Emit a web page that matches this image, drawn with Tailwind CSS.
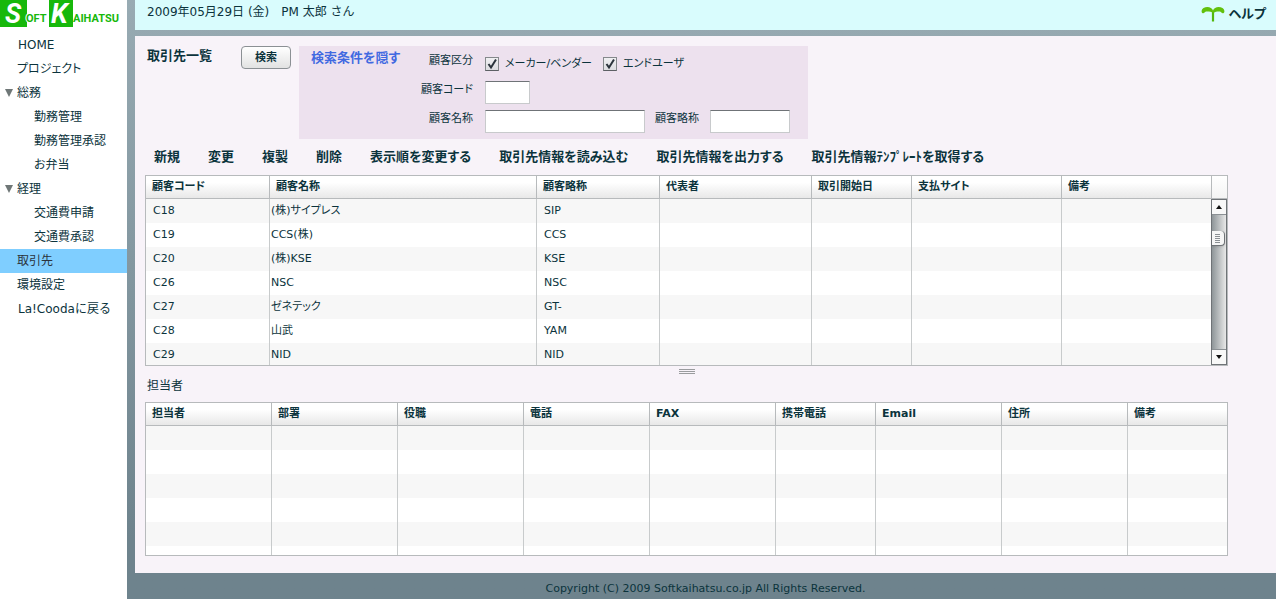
<!DOCTYPE html>
<html lang="ja">
<head>
<meta charset="utf-8">
<title>取引先一覧</title>
<script src="https://cdn.jsdelivr.net/npm/@tailwindcss/browser@4"></script>
</head>
<body class="flex min-h-screen bg-linear-to-b from-[#98abb3] to-[#6e838d] to-90% font-['DejaVu_Sans','Noto_Sans_CJK_JP',sans-serif] text-xs text-[#0b333c] [font-feature-settings:'palt']">
  <aside class="w-[127px] shrink-0 bg-white">
    <a href="#" class="block" aria-label="Soft Kaihatsu">
      <svg width="127" height="28" viewBox="0 0 127 28" class="block font-['Roboto','Liberation_Sans',sans-serif] font-bold">
        <rect width="27" height="27" fill="#17b80b"/>
        <rect x="49" width="24" height="27" fill="#17b80b"/>
        <text x="26" y="22" font-size="11" fill="#17b80b" stroke="#fff" stroke-width="2" paint-order="stroke">OFT</text>
        <text x="73" y="22" font-size="11" fill="#17b80b">AIHATSU</text>
        <text x="5" y="23" font-size="27" font-style="italic" fill="#fff">S</text>
        <text x="51" y="23" font-size="27" font-style="italic" fill="#fff">K</text>
      </svg>
    </a>
    <nav class="pt-[5px] leading-6 whitespace-nowrap">
      <a href="#" class="block pl-[18px]">HOME</a>
      <a href="#" class="block pl-[17px]">プロジェクト</a>
      <a href="#" class="flex items-center gap-1 pl-[5px]"><svg width="8" height="8" viewBox="0 0 8 8"><path d="M0 0h8L4 8z" fill="#6f7777"/></svg>総務</a>
      <a href="#" class="block pl-[34px]">勤務管理</a>
      <a href="#" class="block pl-[34px]">勤務管理承認</a>
      <a href="#" class="block pl-[34px]">お弁当</a>
      <a href="#" class="flex items-center gap-1 pl-[5px]"><svg width="8" height="8" viewBox="0 0 8 8"><path d="M0 0h8L4 8z" fill="#6f7777"/></svg>経理</a>
      <a href="#" class="block pl-[34px]">交通費申請</a>
      <a href="#" class="block pl-[34px]">交通費承認</a>
      <a href="#" class="block bg-[#7fceff] pl-[17px] text-[#2b333c]">取引先</a>
      <a href="#" class="block pl-[17px]">環境設定</a>
      <a href="#" class="block pl-[18px] [font-feature-settings:normal]">La!Coodaに戻る</a>
    </nav>
  </aside>

  <div class="flex min-w-0 flex-1 flex-col pl-2">
    <header class="mb-1.5 flex h-[30px] items-start justify-between bg-[#d9fcfd] pt-0.5 pr-[10px] pl-3 leading-5">
      <p class="whitespace-pre [font-feature-settings:normal]">2009年05月29日 (金)　PM 太郎 さん</p>
      <a href="#" class="flex items-start gap-1 pt-0.5 text-[13px] font-bold">
        <svg width="24" height="16" viewBox="0 0 24 16" class="mt-0.5"><path d="M12 15.500V6" stroke="#52b80c" stroke-width="2.200" fill="none"/><path d="M12.500 7C10 5.500 7 5.200 5 5.500 3.500 5.800 3.500 7.500 1.800 7.200 0 6.500.2 3.500 2.500 2 6-.2 11 1 12 4.500 13 1 18-.2 21.500 2c2.300 1.500 2.500 4.500.7 5.200C20.500 7.500 20.500 5.800 19 5.500 17 5.200 14.500 5.500 12.500 7z" fill="#62c00c"/></svg>
        ヘルプ
      </a>
    </header>

    <main class="flex-1 bg-[#f8f3f9] pt-2.5 pr-12 pb-[17px] pl-2.5">
      <form class="flex items-start pl-0.5">
        <h1 class="w-[94px] text-[13px] leading-5 font-bold">取引先一覧</h1>
        <button type="button" class="h-[23px] w-[50px] rounded border border-[#8b9094] bg-linear-to-b from-white to-[#e2e2e2] text-[11px] leading-5 font-bold">検索</button>
        <div class="ml-2 flex h-[93px] w-[509px] items-start bg-[#ede1ee] pl-3 text-[11px]">
          <a href="#" class="w-[98px] pt-0.5 text-[13px] leading-5 font-bold text-[#4169e1]">検索条件を隠す</a>
          <div class="pt-2">
            <div class="flex h-[27px] items-start">
              <span class="w-16 text-right leading-[14px]">顧客区分</span>
              <label class="ml-3 flex items-center gap-1.5 pt-[3px] leading-[14px]"><span class="grid"><input type="checkbox" checked class="peer col-start-1 row-start-1 size-3.5 appearance-none border border-[#85898c] border-b-[#5c6064] bg-linear-to-b from-[#f0f0f2] to-[#dcdce0]"><svg width="14" height="14" viewBox="0 0 14 14" class="pointer-events-none invisible col-start-1 row-start-1 peer-checked:visible"><path d="M3.500 7l2.500 3.500L11 2.500" fill="none" stroke="#2b333c" stroke-width="2"/></svg></span>メーカー/ベンダー</label>
              <label class="ml-[11px] flex items-center gap-1.5 pt-[3px] leading-[14px]"><span class="grid"><input type="checkbox" checked class="peer col-start-1 row-start-1 size-3.5 appearance-none border border-[#85898c] border-b-[#5c6064] bg-linear-to-b from-[#f0f0f2] to-[#dcdce0]"><svg width="14" height="14" viewBox="0 0 14 14" class="pointer-events-none invisible col-start-1 row-start-1 peer-checked:visible"><path d="M3.500 7l2.500 3.500L11 2.500" fill="none" stroke="#2b333c" stroke-width="2"/></svg></span>エンドユーザ</label>
            </div>
            <div class="flex h-[29px] items-start">
              <label for="code" class="w-16 pt-0.5 text-right leading-[14px]">顧客コード</label>
              <input id="code" class="ml-3 h-[23px] w-[45px] border border-[#c8cacc] border-t-[#6f7377] bg-white px-1">
            </div>
            <div class="flex items-start">
              <label for="name" class="w-16 pt-0.5 text-right leading-[14px]">顧客名称</label>
              <input id="name" class="ml-3 h-[23px] w-40 border border-[#c8cacc] border-t-[#6f7377] bg-white px-1">
              <label for="abbr" class="ml-2.5 w-11 pt-0.5 leading-[14px]">顧客略称</label>
              <input id="abbr" class="ml-[11px] h-[23px] w-20 border border-[#c8cacc] border-t-[#6f7377] bg-white px-1">
            </div>
          </div>
        </div>
      </form>

      <div class="flex h-9 items-center gap-7 pl-[9px] text-[13px] font-bold whitespace-nowrap">
        <button type="button">新規</button>
        <button type="button">変更</button>
        <button type="button">複製</button>
        <button type="button">削除</button>
        <button type="button">表示順を変更する</button>
        <button type="button">取引先情報を読み込む</button>
        <button type="button">取引先情報を出力する</button>
        <button type="button">取引先情報ﾃﾝﾌﾟﾚｰﾄを取得する</button>
      </div>

      <section class="flex h-[191px] overflow-hidden border border-[#b7babc] bg-white text-[11px]">
        <div class="min-w-0 flex-1">
        <table class="w-full table-fixed border-separate border-spacing-0 text-left [&_td]:h-6 [&_td]:border-r [&_td]:border-[#c8cbcc] [&_td]:p-0 [&_td]:pl-[7px] [&_td]:leading-5 [&_td:last-child]:border-r-0 [&_td:nth-child(2)]:pl-px [&_th]:h-[23px] [&_th]:border-r [&_th]:border-b [&_th]:border-[#b7babc] [&_th]:bg-linear-to-b [&_th]:from-white [&_th]:from-30% [&_th]:to-[#e8e8e8] [&_th]:p-0 [&_th]:pl-1.5 [&_th]:leading-5 [&_th:last-child]:border-r-0 [&_tbody_tr:nth-child(odd)]:bg-[#f7f7f7]">
          <colgroup><col class="w-[124px]"><col class="w-[267px]"><col class="w-[123px]"><col class="w-[152px]"><col class="w-[100px]"><col class="w-[150px]"><col></colgroup>
          <thead><tr><th>顧客コード</th><th>顧客名称</th><th>顧客略称</th><th>代表者</th><th>取引開始日</th><th>支払サイト</th><th>備考</th></tr></thead>
          <tbody>
            <tr><td>C18</td><td>(株)サイプレス</td><td>SIP</td><td></td><td></td><td></td><td></td></tr>
            <tr><td>C19</td><td>CCS(株)</td><td>CCS</td><td></td><td></td><td></td><td></td></tr>
            <tr><td>C20</td><td>(株)KSE</td><td>KSE</td><td></td><td></td><td></td><td></td></tr>
            <tr><td>C26</td><td>NSC</td><td>NSC</td><td></td><td></td><td></td><td></td></tr>
            <tr><td>C27</td><td>ゼネテック</td><td>GT-</td><td></td><td></td><td></td><td></td></tr>
            <tr><td>C28</td><td>山武</td><td>YAM</td><td></td><td></td><td></td><td></td></tr>
            <tr><td>C29</td><td>NID</td><td>NID</td><td></td><td></td><td></td><td></td></tr>
          </tbody>
        </table>
        </div>
        <div class="flex w-4 flex-col">
          <div class="h-[23px] border-b border-l border-[#b7babc] bg-linear-to-b from-white to-[#f4f4f4]"></div>
          <div class="flex flex-1 flex-col border border-[#6f7377] bg-linear-to-r from-[#8f9699] to-[#e8e8e8]">
            <button type="button" aria-label="上へ" class="flex h-[15px] items-center justify-center border-b border-[#8b9094] bg-[#f8f8f8]"><svg width="6" height="4" viewBox="0 0 6 4"><path d="M3 0l3 4H0z" fill="#111"/></svg></button>
            <div class="flex-1 pt-4"><div class="flex h-[15px] w-[13px] items-center rounded-r-sm border-r border-b border-[#6f7377] bg-[#f6f6f6] pl-[3px] shadow-sm"><svg width="5" height="9" viewBox="0 0 5 9"><path d="M0 .5h5M0 2.500h5M0 4.500h5M0 6.500h5M0 8.500h5" stroke="#8b9094"/></svg></div></div>
            <button type="button" aria-label="下へ" class="flex h-[15px] items-center justify-center border-t border-[#8b9094] bg-[#f8f8f8]"><svg width="6" height="4" viewBox="0 0 6 4"><path d="M3 4l3-4H0z" fill="#111"/></svg></button>
          </div>
        </div>
      </section>

      <div class="flex h-2.5 items-center justify-center"><svg width="16" height="5" viewBox="0 0 16 5"><path d="M0 .5h16M0 2.500h16M0 4.500h16" stroke="#9a9c9e"/></svg></div>
      <h2 class="h-[26px] pl-0.5 leading-5">担当者</h2>

      <section class="h-[154px] overflow-hidden border border-[#b7babc] bg-white text-[11px]">
        <table class="w-full table-fixed border-separate border-spacing-0 text-left [&_td]:h-6 [&_td]:border-r [&_td]:border-[#c8cbcc] [&_td]:p-0 [&_td:last-child]:border-r-0 [&_th]:h-[23px] [&_th]:border-r [&_th]:border-b [&_th]:border-[#b7babc] [&_th]:bg-linear-to-b [&_th]:from-white [&_th]:from-30% [&_th]:to-[#e8e8e8] [&_th]:p-0 [&_th]:pl-1.5 [&_th]:leading-5 [&_th:last-child]:border-r-0 [&_tbody_tr:nth-child(odd)]:bg-[#f7f7f7]">
          <colgroup><col class="w-[126px]"><col class="w-[126px]"><col class="w-[126px]"><col class="w-[126px]"><col class="w-[126px]"><col class="w-[100px]"><col class="w-[126px]"><col class="w-[126px]"><col></colgroup>
          <thead><tr><th>担当者</th><th>部署</th><th>役職</th><th>電話</th><th>FAX</th><th>携帯電話</th><th>Email</th><th>住所</th><th>備考</th></tr></thead>
          <tbody>
            <tr><td></td><td></td><td></td><td></td><td></td><td></td><td></td><td></td><td></td></tr>
            <tr><td></td><td></td><td></td><td></td><td></td><td></td><td></td><td></td><td></td></tr>
            <tr><td></td><td></td><td></td><td></td><td></td><td></td><td></td><td></td><td></td></tr>
            <tr><td></td><td></td><td></td><td></td><td></td><td></td><td></td><td></td><td></td></tr>
            <tr><td></td><td></td><td></td><td></td><td></td><td></td><td></td><td></td><td></td></tr>
            <tr><td></td><td></td><td></td><td></td><td></td><td></td><td></td><td></td><td></td></tr>
          </tbody>
        </table>
      </section>
    </main>

    <footer class="h-[26px] pt-1.5 text-center text-[11px] leading-5">Copyright (C) 2009 Softkaihatsu.co.jp All Rights Reserved.</footer>
  </div>
</body>
</html>
